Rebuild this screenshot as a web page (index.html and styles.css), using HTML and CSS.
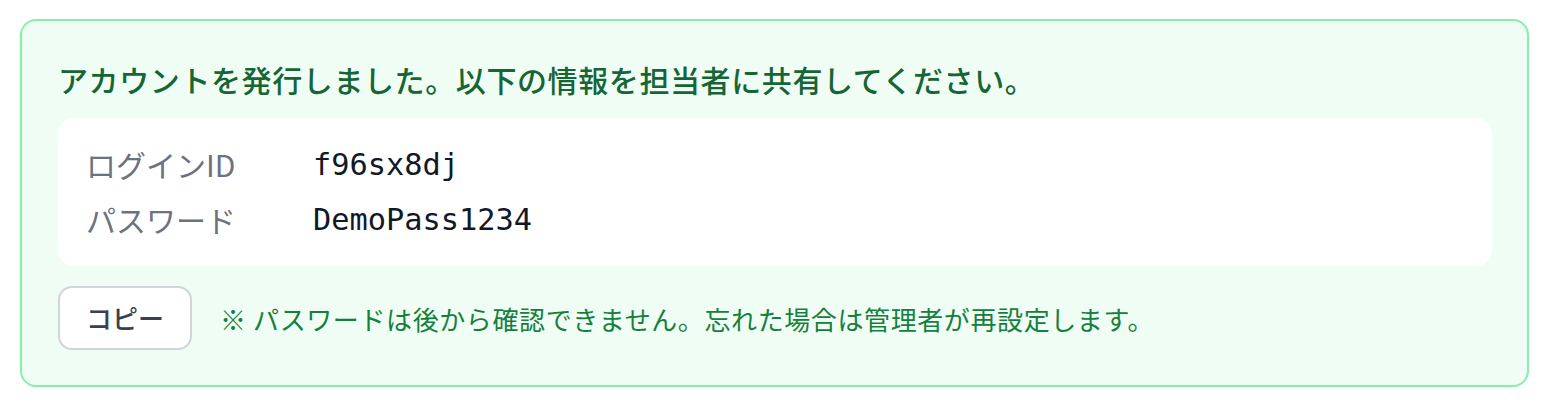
FILE: index.html
```html
<!DOCTYPE html>
<html lang="ja">
<head>
<meta charset="utf-8">
<link rel="stylesheet" href="styles.css">
</head>
<body>
<div class="notice">
  <p class="title">アカウントを発行しました。以下の情報を担当者に共有してください。</p>
  <div class="creds">
    <div class="label">ログインID</div>
    <div class="value">f96sx8dj</div>
    <div class="label">パスワード</div>
    <div class="value">DemoPass1234</div>
  </div>
  <div class="actions">
    <button class="copy" type="button">コピー</button>
    <p class="note">※ パスワードは後から確認できません。忘れた場合は管理者が再設定します。</p>
  </div>
</div>
</body>
</html>
```
FILE: styles.css
```css
html, body {
  margin: 0;
  padding: 0;
  background: #ffffff;
}
body {
  padding: 19px 21px 0 20px;
  font-family: "Noto Sans CJK JP", "Noto Sans", sans-serif;
}
.notice {
  border: 2px solid #86efac;
  background: #f0fdf4;
  border-radius: 16px;
  padding: 36px 35px 35px 36px;
}
.title {
  margin: 0 0 16px;
  font-size: 30px;
  line-height: 45px;
  font-weight: 500;
  letter-spacing: 0.6px;
  color: #166534;
}
.creds {
  background: #ffffff;
  border-radius: 16px;
  padding: 24px 28px;
  display: grid;
  grid-template-columns: 203px 1fr;
  column-gap: 24px;
  row-gap: 10px;
}
.label {
  font-size: 30px;
  line-height: 45px;
  color: #6b7280;
}
.value {
  font-family: "DejaVu Sans Mono", "Liberation Mono", monospace;
  font-size: 30.3px;
  line-height: 45px;
  color: #111827;
}
.actions {
  margin-top: 20px;
  display: flex;
  align-items: center;
  gap: 28px;
}
.copy {
  font-family: "Noto Sans CJK JP", "Noto Sans", sans-serif;
  font-size: 26px;
  line-height: 40px;
  font-weight: 500;
  color: #374151;
  background: #ffffff;
  border: 2px solid #d1d5db;
  border-radius: 14px;
  padding: 10px 26px;
  margin: 0;
}
.note {
  margin: 0;
  font-size: 26px;
  line-height: 39px;
  letter-spacing: 0.6px;
  color: #15803d;
}
```
